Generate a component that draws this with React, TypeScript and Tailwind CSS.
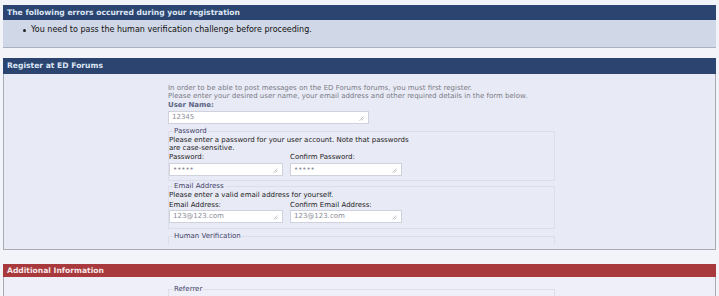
import React from 'react';

const font = { fontFamily: '"DejaVu Sans", Verdana, sans-serif' };

function Grip() {
  return (
    <svg width="5" height="5" viewBox="0 0 5 5" className="absolute right-[4px] bottom-[2px]">
      <path d="M4.5 0.5 L0.5 4.5 M4.5 2.5 L2.5 4.5" stroke="#b4b4c0" strokeWidth="0.8" />
    </svg>
  );
}

function Field({ value, width }: { value: string; width: string }) {
  return (
    <div className={`relative h-[13px] ${width} bg-white border border-[#cfd1dc] text-[7px] text-[#8a8a96] leading-[11px] px-[3px]`}>
      {value}
      <Grip />
    </div>
  );
}

function Label({ children }: { children: React.ReactNode }) {
  return <div className="text-[7px] leading-[8px] text-[#222]">{children}</div>;
}

function Box({ title, className, children }: { title: string; className?: string; children?: React.ReactNode }) {
  return (
    <fieldset className={`w-[387px] border border-[#dcdee9] ${className ?? ''}`}>
      <legend className="text-[7px] leading-[8px] text-[#3e3e68] ml-[4px] px-[1px]">{title}</legend>
      {children}
    </fieldset>
  );
}

export default function App() {
  return (
    <div style={font} className="w-[719px] h-[296px] overflow-hidden bg-[#f3f4f9] px-[3px] pt-[5px]">
      {/* errors */}
      <div className="w-[713px]">
        <div className="h-[15px] bg-[#2b4570] text-[#dde5f4] font-bold text-[7.6px] leading-[15px] px-[4px]">
          The following errors occurred during your registration
        </div>
        <div className="h-[28px] bg-[#d0d7e6] border-b border-[#a9b1c3] pt-[4px] pl-[20px] text-[8px] text-[#111]">
          <div className="flex items-center gap-[5px]">
            <span className="w-[3px] h-[3px] rounded-full bg-[#222]" />
            <span>You need to pass the human verification challenge before proceeding.</span>
          </div>
        </div>
      </div>

      {/* register */}
      <div className="w-[713px] mt-[10px]">
        <div className="h-[16px] bg-[#2b4570] text-[#dde5f4] font-bold text-[7.6px] leading-[16px] px-[4px]">
          Register at ED Forums
        </div>
        <div className="h-[176px] bg-[#e8eaf5] border-x border-b border-[#a8aab4] pl-[164px] pt-[10px]">
          <div className="text-[7px] leading-[8px] text-[#7a7a86]">
            <div>In order to be able to post messages on the ED Forums forums, you must first register.</div>
            <div>Please enter your desired user name, your email address and other required details in the form below.</div>
          </div>
          <div className="text-[7px] leading-[9px] font-bold text-[#5b6685] mt-[1px]">User Name:</div>
          <div className="mt-[1px]">
            <Field value="12345" width="w-[201px]" />
          </div>

          <Box title="Password" className="mt-[3px] pb-[4px]">
            <div className="text-[7px] leading-[8px] text-[#222] mt-[1px]">
              <div>Please enter a password for your user account. Note that passwords</div>
              <div>are case-sensitive.</div>
            </div>
            <div className="flex gap-[7px] mt-[1px]">
              <div>
                <Label>Password:</Label>
                <div className="mt-[2px]">
                  <Field value="•••••" width="w-[114px]" />
                </div>
              </div>
              <div>
                <Label>Confirm Password:</Label>
                <div className="mt-[2px]">
                  <Field value="•••••" width="w-[112px]" />
                </div>
              </div>
            </div>
          </Box>

          <Box title="Email Address" className="mt-[1px] pb-[5px]">
            <div className="text-[7px] leading-[8px] text-[#222] mt-[1px]">Please enter a valid email address for yourself.</div>
            <div className="flex gap-[7px] mt-[2px]">
              <div>
                <Label>Email Address:</Label>
                <div className="mt-[1px]">
                  <Field value="123@123.com" width="w-[114px]" />
                </div>
              </div>
              <div>
                <Label>Confirm Email Address:</Label>
                <div className="mt-[1px]">
                  <Field value="123@123.com" width="w-[112px]" />
                </div>
              </div>
            </div>
          </Box>

          <Box title="Human Verification" className="mt-[3px] h-[12px] border-b-0" />
        </div>
      </div>

      {/* additional */}
      <div className="w-[713px] mt-[14px]">
        <div className="h-[13px] bg-[#a8393d] text-[#f6e6e6] font-bold text-[7.6px] leading-[13px] px-[4px]">
          Additional Information
        </div>
        <div className="h-[30px] bg-[#eeeff8] border-x border-[#a8aab4] pl-[164px] pt-[8px]">
          <Box title="Referrer" className="h-[20px] border-b-0" />
        </div>
      </div>
    </div>
  );
}
